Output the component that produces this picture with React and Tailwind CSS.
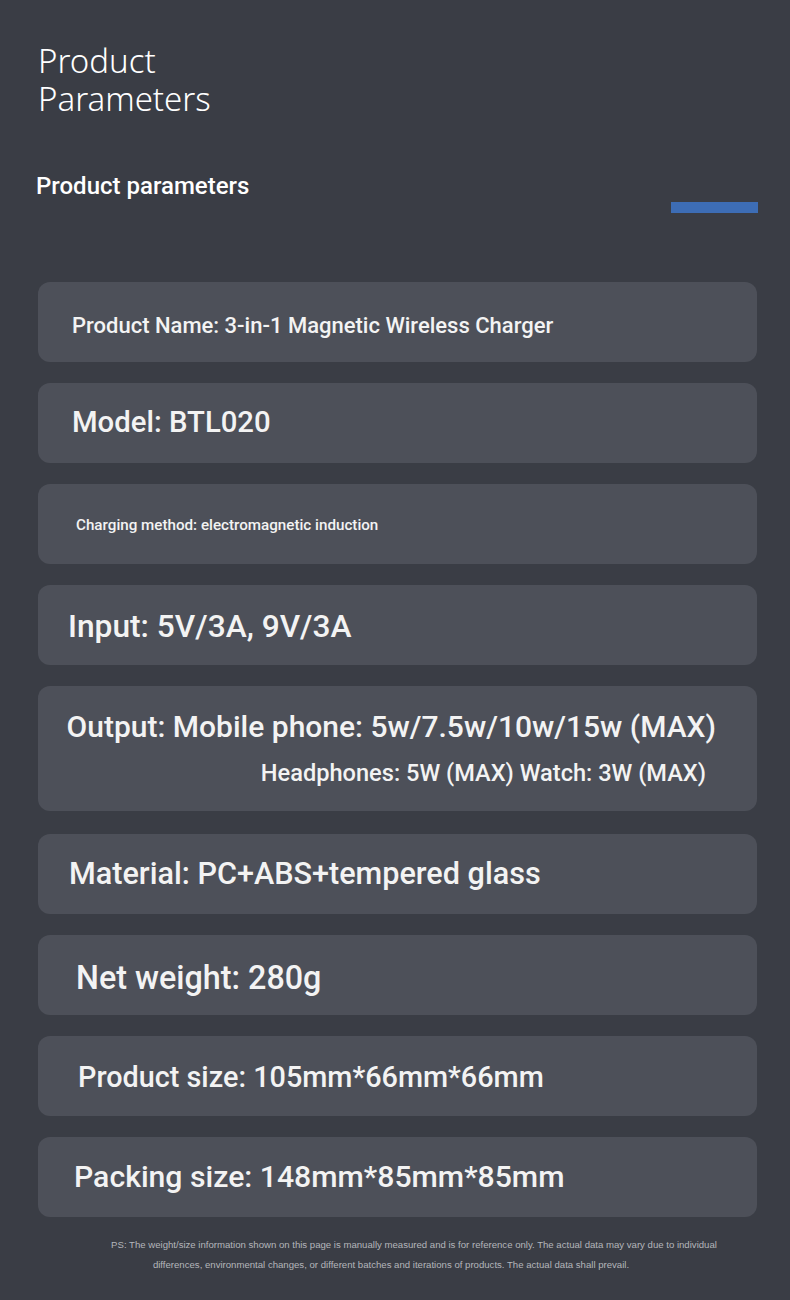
import React from "react";

const rows = [
  { text: "Product Name: 3-in-1 Magnetic Wireless Charger", cls: "pl-[34px] pt-[6px] text-[22px]" },
  { text: "Model: BTL020", cls: "pl-[34px] text-[29.3px]" },
  { text: "Charging method: electromagnetic induction", cls: "pl-[38px] pt-[3px] text-[15.2px]" },
  { text: "Input: 5V/3A, 9V/3A", cls: "pl-[30px] pt-[3px] text-[31.7px]" },
];

const rowsAfter = [
  { text: "Material: PC+ABS+tempered glass", cls: "pl-[31px] text-[30.6px]" },
  { text: "Net weight: 280g", cls: "pl-[38px] pt-[6px] text-[32.3px]" },
  { text: "Product size: 105mm*66mm*66mm", cls: "pl-[40px] pt-[3px] text-[28.8px]" },
  { text: "Packing size: 148mm*85mm*85mm", cls: "pl-[36px] text-[30.2px]" },
];

const Card = ({ children, className = "" }) => (
  <div className={`rounded-[12px] bg-[#4d5059] text-[#f3f3f3] font-medium ${className}`}>{children}</div>
);

export default function App() {
  return (
    <div className="w-[790px] h-[1300px] bg-[#3a3d45] font-['Roboto',sans-serif] overflow-hidden">
      <div className="pl-[38px] pt-[42px] text-[33px] leading-[38px] font-light text-white font-['Noto_Sans',sans-serif]">
        <div>Product</div>
        <div>Parameters</div>
      </div>

      <div className="flex items-start justify-between pl-[36px] pr-[32px] mt-[50px]">
        <div className="text-[24px] font-medium text-white">Product parameters</div>
        <div className="w-[87px] h-[11px] bg-[#3d6db5] mt-[34px]" />
      </div>

      <div className="ml-[38px] mr-[33px] mt-[69px] flex flex-col gap-[21px]">
        {rows.map((r) => (
          <Card key={r.text} className={`h-[80px] flex items-center ${r.cls}`}>
            {r.text}
          </Card>
        ))}
        <Card className="h-[125px] mb-[2px] flex flex-col items-end pr-[41px] pt-[21px]">
          <div className="text-[30px] leading-[40px]">Output: Mobile phone: 5w/7.5w/10w/15w (MAX)</div>
          <div className="text-[23.6px] leading-[30px] mt-[11px] mr-[10px]">Headphones: 5W (MAX) Watch: 3W (MAX)</div>
        </Card>
        {rowsAfter.map((r) => (
          <Card key={r.text} className={`h-[80px] flex items-center ${r.cls}`}>
            {r.text}
          </Card>
        ))}
      </div>

      <div className="mt-[18px] text-center text-[9.6px] leading-[20px] text-[#b4b6bb] font-['Liberation_Sans',sans-serif]">
        <div className="pl-[38px]">
          PS: The weight/size information shown on this page is manually measured and is for reference only. The actual data may vary due to individual
        </div>
        <div className="pr-[8px]">
          differences, environmental changes, or different batches and iterations of products. The actual data shall prevail.
        </div>
      </div>
    </div>
  );
}
